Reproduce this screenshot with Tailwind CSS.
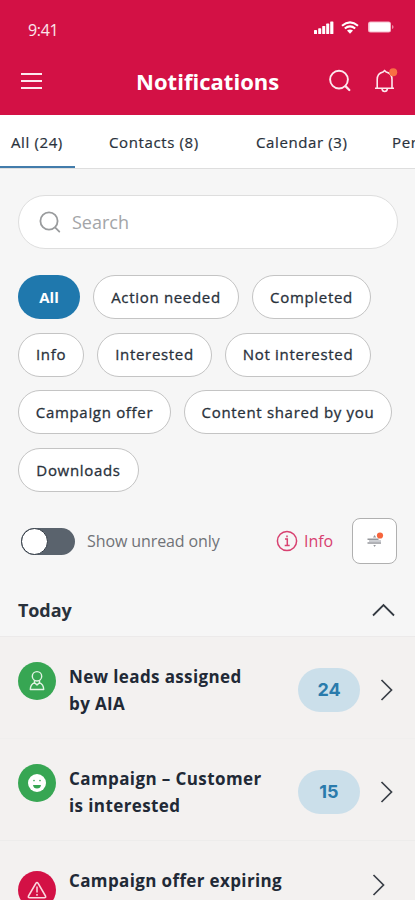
<!DOCTYPE html>
<html lang="en">
<head>
<meta charset="utf-8">
<meta name="viewport" content="width=device-width, initial-scale=1">
<title>Notifications</title>
<script src="https://cdn.jsdelivr.net/npm/@tailwindcss/browser@4"></script>
</head>
<body class="h-[900px] w-[415px] overflow-hidden bg-[#f6f6f6] font-['Open_Sans',sans-serif] text-[#29313b]">
<header class="h-[115px] bg-[#d31145] text-white">
  <div class="flex h-[56px] items-start justify-between pt-[18px] pr-[21px] pl-[28px]">
    <span class="pt-px text-[16px] leading-[22px] tracking-[-0.3px] text-white/90">9:41</span>
    <div class="flex h-[18px] items-center">
      <svg class="mr-[7px] h-[13px] w-[20px]" viewBox="0 0 20 13" fill="currentColor"><rect y="9" width="3" height="4" rx=".6"/><rect x="4.2" y="7.3" width="3" height="5.7" rx=".6"/><rect x="8.2" y="5" width="3" height="8" rx=".6"/><rect x="12.2" y="2.6" width="3" height="10.4" rx=".6"/><rect x="16.2" y=".5" width="3.2" height="12.5" rx=".6"/></svg>
      <svg class="mr-[8px] h-[13px] w-[18px]" viewBox="0 0 18 13" fill="none" stroke="currentColor" stroke-width="2.1"><path d="M1 4.7Q9-1.8 17 4.7M3.8 7.5Q9 3.1 14.2 7.5"/><path d="M6 9.6Q9 7.5 12 9.6L9 12.8Z" fill="currentColor" stroke="none"/></svg>
      <svg class="h-[12px] w-[27px]" viewBox="0 0 27 12"><rect x="1" y=".5" width="23" height="11" rx="2.5" fill="#f5b6c7"/><rect x="2.500" y="1.5" width="20.5" height="9" rx="1.2" fill="#fff"/><path d="M25 4v4q1.6-.6 1.6-2t-1.6-2Z" fill="#eb8aa4"/></svg>
    </div>
  </div>
  <div class="flex h-[50px] items-center pr-[16px] pl-[21px]">
    <svg class="h-[18px] w-[21px]" viewBox="0 0 21 18" fill="none" stroke="#fce9ee" stroke-width="2"><path d="M0 2h21M0 9h21M0 16h21"/></svg>
    <h1 class="ml-[94px] w-[146px] text-[22px] leading-[30px] font-bold tracking-[0.03px] whitespace-nowrap">Notifications</h1>
    <svg class="ml-[46px] h-[24px] w-[24px]" viewBox="0 0 24 24" fill="none" stroke="#fde8ee" stroke-width="1.9" stroke-linecap="round"><circle cx="11" cy="10.600" r="8.900"/><path d="m17.700 17.400 3.600 3.600" stroke-width="2.300"/></svg>
    <svg class="ml-[21px] h-[26px] w-[26px]" viewBox="0 0 26 26" fill="none" stroke="#fde8ee" stroke-width="1.6"><path d="M2 20.200h19M4.200 20v-8.500C4.200 7.500 6.800 4.800 10 4l1.600-1.500L13.200 4C16.800 4.900 19 7.700 19 11.500V20M9 20.700q.3 2.800 2.700 2.800t2.700-2.800"/><circle cx="20.200" cy="4.300" r="4" fill="#f86f43" stroke="none"/></svg>
  </div>
</header>
<nav class="h-[54px] overflow-hidden border-b border-[#dedede] bg-white text-[15px] tracking-[0.620px] whitespace-nowrap [-webkit-text-stroke:0.2px]">
  <div class="flex h-full">
    <a class="h-full w-[75px] shrink-0 border-b-2 border-[#427cab] pt-[16px] pl-[11px]">All (24)</a>
    <a class="w-[147px] shrink-0 pt-[16px] pl-[34px]">Contacts (8)</a>
    <a class="w-[170px] shrink-0 pt-[16px] pl-[34px]">Calendar (3)</a>
    <a class="shrink-0 pt-[16px]">Personal</a>
  </div>
</nav>
<main>
  <section class="px-[18px] pt-[26px]">
    <div class="flex h-[54px] w-[380px] items-center rounded-full border border-[#dedede] bg-white pl-[20px]">
      <svg class="h-[22px] w-[22px]" viewBox="0 0 22 22" fill="none" stroke="#999b9d" stroke-width="1.8" stroke-linecap="round"><circle cx="10" cy="10" r="8.600"/><path d="m16.300 16.600 4 4"/></svg>
      <span class="ml-[11px] text-[18px] text-[#a3a5a8]">Search</span>
    </div>
    <div class="mt-[26px] flex flex-col gap-[13.700px] text-[15px] tracking-[0.680px] whitespace-nowrap [-webkit-text-stroke:0.3px]">
      <div class="flex gap-[13px]">
        <span class="flex h-[44px] w-[62px] items-center justify-center rounded-full bg-[#1f78ad] text-[15px] font-bold tracking-normal text-white [-webkit-text-stroke:0]">All</span>
        <span class="flex h-[44px] w-[146px] items-center justify-center rounded-full border border-[#c4c4c4] bg-white">Action needed</span>
        <span class="flex h-[44px] w-[119px] items-center justify-center rounded-full border border-[#c4c4c4] bg-white">Completed</span>
      </div>
      <div class="flex gap-[13px]">
        <span class="flex h-[44px] w-[66px] items-center justify-center rounded-full border border-[#c4c4c4] bg-white">Info</span>
        <span class="flex h-[44px] w-[115px] items-center justify-center rounded-full border border-[#c4c4c4] bg-white">Interested</span>
        <span class="flex h-[44px] w-[146px] items-center justify-center rounded-full border border-[#c4c4c4] bg-white">Not interested</span>
      </div>
      <div class="flex gap-[13px]">
        <span class="flex h-[44px] w-[153px] items-center justify-center rounded-full border border-[#c4c4c4] bg-white">Campaign offer</span>
        <span class="flex h-[44px] w-[208px] items-center justify-center rounded-full border border-[#c4c4c4] bg-white">Content shared by you</span>
      </div>
      <div class="flex">
        <span class="flex h-[44px] w-[121px] items-center justify-center rounded-full border border-[#c4c4c4] bg-white">Downloads</span>
      </div>
    </div>
    <div class="mt-[26px] flex h-[46px] items-center pl-[3px] whitespace-nowrap">
      <span class="flex h-[27px] w-[54px] shrink-0 items-center rounded-full bg-[#5a636d]"><i class="block h-[27px] w-[27px] rounded-full border-[1.500px] border-[#303943] bg-white"></i></span>
      <span class="ml-[12px] w-[134px] text-[16px] tracking-[-0.1px] text-[#707277]">Show unread only</span>
      <svg class="ml-[56px] h-[22px] w-[22px] shrink-0" viewBox="0 0 22 22" fill="none" stroke="#d84170" stroke-width="1.500"><circle cx="11" cy="11" r="9.600"/><path d="M9 9h2.300v6.500M8.700 15.500h5M11 5.500v1.800"/></svg>
      <span class="ml-[6px] w-[29px] text-[16px] tracking-[-0.1px] text-[#d84170]">Info</span>
      <span class="ml-[19px] flex h-[46px] w-[45px] shrink-0 items-center justify-center rounded-[8px] border border-[#b0b0b0] bg-white">
        <svg class="h-[18px] w-[18px]" viewBox="0 0 18 18" fill="none" stroke="#95979c"><path d="M1.500 7.200h11M1.500 11h13.500" stroke-width="1.400"/><path d="M3 9.100h12" stroke="#c9cbd0" stroke-width="2"/><path d="m7 5.500 1.600-2.500 1.600 2.500ZM7.300 13l1.300 2 1.300-2Z" fill="#95979c" stroke="none"/><circle cx="14" cy="3.500" r="3.100" fill="#f6653c" stroke="none"/></svg>
      </span>
    </div>
    <div class="flex h-[72px] items-center justify-between pt-[20px] pr-[2px]">
      <h2 class="text-[18px] leading-[26px] font-bold tracking-[-0.1px]">Today</h2>
      <svg class="h-[14px] w-[23px]" viewBox="0 0 23 14" fill="none" stroke="#343a42" stroke-width="1.800"><path d="m1 12.500 10.500-10.500L22 12.500"/></svg>
    </div>
  </section>
  <section class="border-t border-[#eceaea] bg-[#f3f1f0] text-[17px] leading-[26.500px] font-bold text-[#212936]">
    <article class="flex h-[102px] items-start border-b border-[#f0efee] pl-[18px]">
      <svg class="mt-[25px] h-[38px] w-[38px]" viewBox="0 0 38 38" fill="none"><circle cx="19" cy="19" r="19" fill="#37a653"/><g stroke="#e2f3e5" stroke-width="1.400" stroke-linejoin="round"><circle cx="19" cy="14.300" r="4.700"/><path d="M12.300 27.500q.2-5 4.200-6.800l2.500 2.200 2.500-2.200q4 1.800 4.200 6.800ZM16.500 18.200v2.500M21.500 18.200v2.500"/></g></svg>
      <h3 class="mt-[27px] ml-[13px] w-[229px] tracking-[0.370px] whitespace-nowrap">New leads assigned<br>by AIA</h3>
      <span class="mt-[31px] flex h-[44px] w-[62px] items-center justify-center rounded-full bg-[#cbdfea] font-['Inter',sans-serif] text-[18px] text-[#2a7bac]">24</span>
      <svg class="mt-[41px] ml-[20px] h-[24px] w-[14px]" viewBox="0 0 14 24" fill="none" stroke="#393f47" stroke-width="1.700"><path d="m1.500 2 10 10-10 10"/></svg>
    </article>
    <article class="flex h-[102px] items-start border-b border-[#edeceb] pl-[18px]">
      <svg class="mt-[25px] h-[38px] w-[38px]" viewBox="0 0 38 38"><circle cx="19" cy="19" r="19" fill="#37a653"/><circle cx="19" cy="19" r="9" fill="#fff"/><g fill="#37a653"><circle cx="16" cy="16.600" r=".8"/><circle cx="22" cy="16.600" r=".8"/><path d="M15 21h8Q22.500 24.500 19 24.500T15 21Z"/></g></svg>
      <h3 class="mt-[27px] ml-[13px] w-[229px] tracking-[0.400px] whitespace-nowrap">Campaign – Customer<br>is interested</h3>
      <span class="mt-[31px] flex h-[44px] w-[62px] items-center justify-center rounded-full bg-[#cbdfea] font-['Inter',sans-serif] text-[18px] text-[#2a7bac]">15</span>
      <svg class="mt-[41px] ml-[20px] h-[24px] w-[14px]" viewBox="0 0 14 24" fill="none" stroke="#393f47" stroke-width="1.700"><path d="m1.500 2 10 10-10 10"/></svg>
    </article>
    <article class="flex h-[102px] items-start pl-[18px]">
      <svg class="mt-[30px] h-[38px] w-[38px]" viewBox="0 0 38 38" fill="none"><circle cx="19" cy="19" r="19" fill="#d31145"/><path d="M17.800 12.500q1.200-2 2.400 0l7.300 12.500q.8 1.700-1.200 1.700H11.700q-2 0-1.200-1.700ZM19 15.500v6M19 23v1.800" stroke="#fad7df" stroke-width="1.500" stroke-linejoin="round"/></svg>
      <h3 class="mt-[27px] ml-[13px] w-[303px] tracking-[0.370px] whitespace-nowrap">Campaign offer expiring</h3>
      <svg class="mt-[32px] h-[24px] w-[14px]" viewBox="0 0 14 24" fill="none" stroke="#393f47" stroke-width="1.700"><path d="m1.500 2 10 10-10 10"/></svg>
    </article>
  </section>
</main>
</body>
</html>
